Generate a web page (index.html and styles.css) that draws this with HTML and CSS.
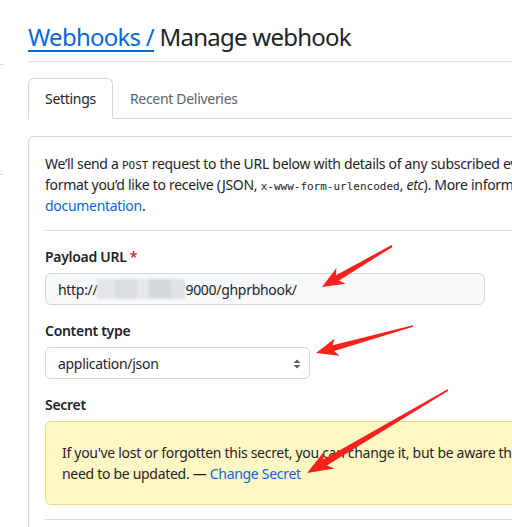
FILE: index.html
```html
<!DOCTYPE html>
<html>
<head>
<meta charset="utf-8">
<link rel="stylesheet" href="styles.css">
</head>
<body>
<div class="page">
  <aside class="side">
    <div class="side-line"></div>
    <div class="side-line second"></div>
  </aside>
  <main class="main">
    <div class="subhead">
      <h2 class="title"><a class="crumb" href="#">Webhooks /</a> Manage webhook</h2>
    </div>
    <nav class="tabs">
      <a class="tab selected" href="#">Settings</a>
      <a class="tab" href="#">Recent Deliveries</a>
    </nav>
    <section class="box">
      <p class="intro">We’ll send a <code>POST</code> request to the URL below with details of any subscribed events. You can also specify which data<br>format you’d like to receive (JSON, <code>x-www-form-urlencoded</code>, <em>etc</em>). More information can be found in our developer<br><a class="link" href="#">documentation</a>.</p>
      <hr class="divider">
      <div class="field">
        <label class="label">Payload URL <span class="req">*</span></label>
        <div class="input">http://<span class="blur"></span>9000/ghprbhook/</div>
      </div>
      <div class="field">
        <label class="label">Content type</label>
        <div class="select">application/json
          <svg class="caret" width="10" height="12" viewBox="0 0 10 12"><path d="M5 1.5 L8.5 5 H1.5 Z M5 10.5 L8.5 7 H1.5 Z" fill="#59636e"/></svg>
        </div>
      </div>
      <div class="field">
        <label class="label">Secret</label>
        <div class="flash">If you've lost or forgotten this secret, you can change it, but be aware that any integrations using this secret will<br>need to be updated. — <a class="link" href="#">Change Secret</a></div>
      </div>
      <hr class="divider bottom">
    </section>
  </main>
</div>
<svg class="arrows" width="512" height="527" viewBox="0 0 512 527">
  <polygon fill="#f5231c" points="322,287 345.6,283.7 339,280.5 392.5,246.9 391.5,245.1 336,275.3 336.4,268.1"/>
  <polygon fill="#f5231c" points="316,353 339.6,355.8 334.1,351.1 413.2,326.7 412.8,325.3 332.5,345.3 334.8,338.4"/>
  <polygon fill="#f5231c" points="307,473 334.5,468.4 326.9,465.4 448.4,390.7 447.6,389.3 323.3,459.4 324.3,451.2"/>
</svg>
</body>
</html>
```
FILE: styles.css
```css
html, body {
  margin: 0;
  padding: 0;
  background: #ffffff;
  overflow: hidden;
}
body {
  font-family: "Noto Sans", "Open Sans", sans-serif;
  color: #1f2328;
  font-size: 14px;
  line-height: 21px;
  letter-spacing: -0.3px;
  width: 512px;
  height: 527px;
  position: relative;
}
.page {
  display: flex;
}
.side {
  width: 4px;
  flex: none;
  padding-top: 64px;
}
.side-line {
  height: 1px;
  background: #d8dee4;
}
.side-line.second {
  margin-top: 109px;
}
.main {
  margin-left: 24px;
  width: 720px;
  flex: none;
}
.subhead {
  padding-top: 19px;
  padding-bottom: 6px;
  border-bottom: 1px solid #d8dee4;
}
.title {
  margin: 0;
  font-size: 24px;
  line-height: 36px;
  font-weight: 400;
  letter-spacing: -0.75px;
  color: #1f2328;
}
.crumb {
  color: #0969da;
  text-decoration: underline;
  text-underline-offset: 4px;
  text-decoration-thickness: 2px;
}
.tabs {
  display: flex;
  margin-top: 16px;
  border-bottom: 1px solid #d0d7de;
}
.tab {
  display: block;
  padding: 8px 16px;
  line-height: 23px;
  color: #59636e;
  text-decoration: none;
  border: 1px solid transparent;
  border-radius: 6px 6px 0 0;
  margin-bottom: -1px;
}
.tab.selected {
  color: #1f2328;
  border-color: #d0d7de;
  border-bottom-color: #ffffff;
  background: #ffffff;
}
.box {
  margin-top: 17px;
  border: 1px solid #d0d7de;
  border-radius: 6px;
  padding: 16px;
}
.intro {
  margin: 0;
  white-space: nowrap;
  height: 63px;
}
code {
  font-family: "DejaVu Sans Mono", monospace;
  font-size: 11px;
  line-height: 10px;
  letter-spacing: 0;
}
.link {
  color: #0969da;
  text-decoration: none;
}
.divider {
  border: 0;
  height: 1px;
  background: #d8dee4;
  margin: 14px 0 16px;
}
.divider.bottom {
  margin: 14px 0 0;
}
.field {
  margin-bottom: 16px;
}
.label {
  display: block;
  font-weight: 600;
  line-height: 20px;
  margin-bottom: 6px;
}
.req {
  color: #d1242f;
}
.input {
  height: 30px;
  border: 1px solid #d0d7de;
  border-radius: 6px;
  background: #f6f8fa;
  padding: 0 12px;
  display: flex;
  align-items: center;
  width: 414px;
}
.blur {
  display: inline-block;
  width: 88px;
  height: 20px;
  background: linear-gradient(90deg, #e3e5e8 0 18px, #d9dce0 18px 40px, #e6e8eb 40px 52px, #d5d8dc 52px 74px, #dfe2e5 74px 88px);
  filter: blur(1px);
}
.select {
  position: relative;
  width: 239px;
  height: 30px;
  border: 1px solid #d0d7de;
  border-radius: 6px;
  background: #ffffff;
  padding: 0 12px;
  display: flex;
  align-items: center;
}
.caret {
  position: absolute;
  right: 7px;
  top: 10px;
}
.flash {
  background: #fff8c5;
  border: 1px solid #ecd98c;
  border-radius: 6px;
  padding: 20px 16px;
  white-space: nowrap;
}
.field:last-of-type {
  margin-bottom: 0;
}
.arrows {
  position: absolute;
  left: 0;
  top: 0;
  pointer-events: none;
}
```
